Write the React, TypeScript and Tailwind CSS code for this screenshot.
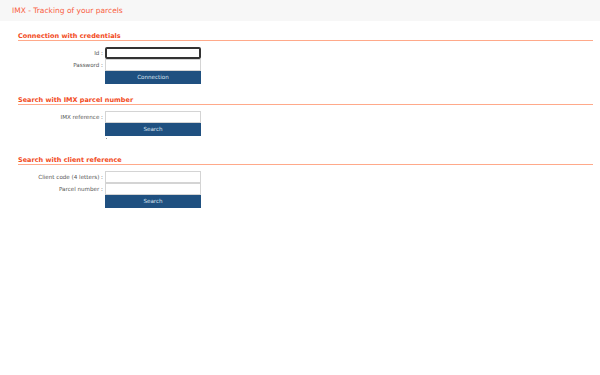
import React from "react";

const font = { fontFamily: '"DejaVu Sans", Verdana, sans-serif' };

function Field({ label, focused }: { label: string; focused?: boolean }) {
  return (
    <div className="flex items-center">
      <label className="w-[87px] pr-[2px] text-right text-[5.6px] text-[#555]">{label} :</label>
      <input
        className={
          focused
            ? "h-[12px] w-[96px] rounded-[2px] border-2 border-[#333] bg-white"
            : "h-[12px] w-[96px] border border-[#d4d4d4] bg-white"
        }
      />
    </div>
  );
}

function SubmitButton({ text }: { text: string }) {
  return (
    <div className="flex">
      <div className="w-[87px]" />
      <button className="h-[13px] w-[96px] bg-[#1f5080] text-[5.6px] text-[#dde6f0]">{text}</button>
    </div>
  );
}

function Section({ title, className, children }: { title: string; className: string; children: React.ReactNode }) {
  return (
    <div className={className}>
      <h2 className="border-b border-[#ffa98a] text-[6.5px] leading-[8px] font-bold text-[#f24a22]">{title}</h2>
      <div className="mt-[6px] flex flex-col">{children}</div>
    </div>
  );
}

export default function App() {
  return (
    <div className="min-h-screen w-[600px] bg-white" style={font}>
      <div className="flex h-[21px] items-center bg-[#f7f7f7] pl-[12px] text-[7.5px] text-[#f9603f]">
        IMX - Tracking of your parcels
      </div>
      <div className="pl-[18px] pr-[7px]">
        <Section title="Connection with credentials" className="mt-[11px]">
          <Field label="Id" focused />
          <Field label="Password" />
          <SubmitButton text="Connection" />
        </Section>
        <Section title="Search with IMX parcel number" className="mt-[12px]">
          <Field label="IMX reference" />
          <SubmitButton text="Search" />
          <div className="flex h-[8px]">
            <div className="w-[88px]" />
            <span className="mt-[2px] h-[1px] w-[1px] bg-[#999]" />
          </div>
        </Section>
        <Section title="Search with client reference" className="mt-[12px]">
          <Field label="Client code (4 letters)" />
          <Field label="Parcel number" />
          <SubmitButton text="Search" />
        </Section>
      </div>
    </div>
  );
}
